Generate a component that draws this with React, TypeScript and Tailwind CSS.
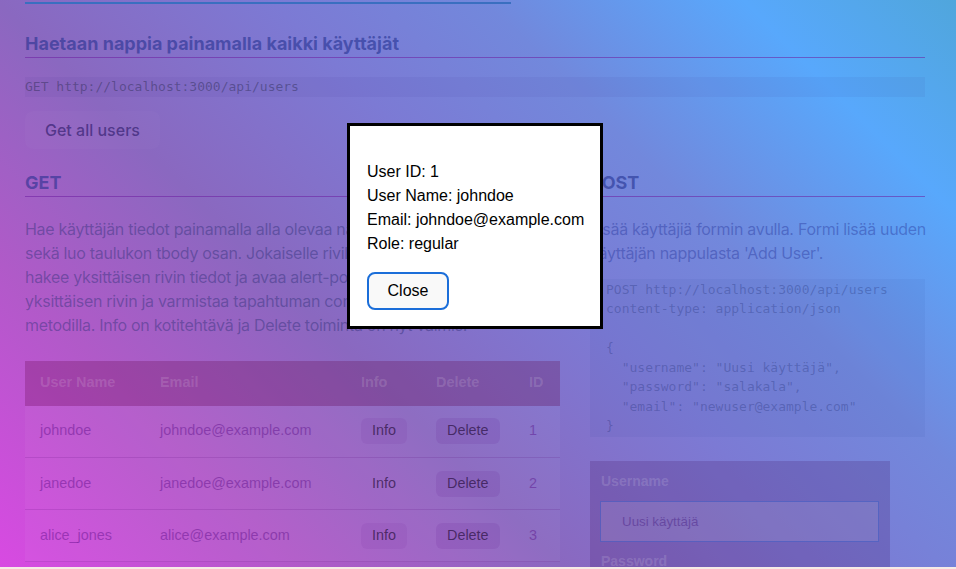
import React from 'react';

const users = [
  { id: 1, username: 'johndoe', email: 'johndoe@example.com', infoBg: true },
  { id: 2, username: 'janedoe', email: 'janedoe@example.com', infoBg: false },
  { id: 3, username: 'alice_jones', email: 'alice@example.com', infoBg: true },
];

const postExample = `POST http://localhost:3000/api/users
content-type: application/json

{
  "username": "Uusi käyttäjä",
  "password": "salakala",
  "email": "newuser@example.com"
}`;

const getText = [
  'Hae käyttäjän tiedot painamalla alla olevaa nappia. Funktio hakee',
  'sekä luo taulukon tbody osan. Jokaiselle riville Info-nappi, joka',
  'hakee yksittäisen rivin tiedot ja avaa alert-popupin. Delete poistaa',
  'yksittäisen rivin ja varmistaa tapahtuman confirm-',
  'metodilla. Info on kotitehtävä ja Delete toiminta on nyt valmis.',
];

function UserTable() {
  return (
    <table className="mt-6 w-full table-fixed border-collapse font-['Liberation_Sans',Arial,sans-serif] text-[14.4px]">
      <colgroup>
        <col className="w-[120px]" />
        <col className="w-[201px]" />
        <col className="w-[75px]" />
        <col className="w-[93px]" />
        <col className="w-[46px]" />
      </colgroup>
      <thead>
        <tr className="h-[45px] bg-[#600040]/25 text-left font-bold text-white/15">
          <th className="px-[15px]">User Name</th>
          <th className="px-[15px]">Email</th>
          <th className="px-[15px]">Info</th>
          <th className="px-[15px]">Delete</th>
          <th className="px-[15px]">ID</th>
        </tr>
      </thead>
      <tbody>
        {users.map((u) => (
          <tr
            key={u.id}
            className="h-[52px] border-b border-[#500070]/15 bg-white/[0.04] text-[#500080]/40"
          >
            <td className="px-[15px]">{u.username}</td>
            <td className="px-[15px]">{u.email}</td>
            <td className="px-[15px]">
              <button
                className={`h-[26px] rounded-md px-[11px] text-[#2a1040]/70 ${
                  u.infoBg ? 'bg-[#500080]/[0.07]' : 'bg-transparent'
                }`}
              >
                Info
              </button>
            </td>
            <td className="px-[15px]">
              <button className="h-[26px] rounded-md bg-[#500080]/10 px-[11px] text-[#2a1040]/70">
                Delete
              </button>
            </td>
            <td className="px-[15px]">{u.id}</td>
          </tr>
        ))}
      </tbody>
    </table>
  );
}

function AddUserForm() {
  return (
    <form className="mt-6 w-[300px] bg-[#401060]/20 p-[10px] font-['Liberation_Sans',Arial,sans-serif]">
      <label className="block pl-px text-sm font-bold leading-5 text-white/15">Username</label>
      <input
        className="mt-[10px] h-[41px] w-[279px] border border-[#3050c0]/50 bg-white/10 px-[21px] text-[13.33px] placeholder:text-[#300070]/35"
        placeholder="Uusi käyttäjä"
      />
      <label className="mt-[9px] block pl-px text-sm font-bold leading-5 text-white/15">Password</label>
      <input
        className="mt-[10px] h-[41px] w-[279px] border border-[#3050c0]/50 bg-white/10 px-[21px] text-[13.33px] placeholder:text-[#300070]/35"
        placeholder="salakala"
        type="password"
      />
    </form>
  );
}

function InfoDialog() {
  return (
    <div className="absolute left-[347px] top-[123px] border-[3px] border-black bg-white pb-4 pl-[17px] pr-4 pt-[34px] font-['Liberation_Sans',Arial,sans-serif] text-base leading-6 text-black">
      <p>User ID: 1</p>
      <p>User Name: johndoe</p>
      <p>Email: johndoe@example.com</p>
      <p>Role: regular</p>
      <button className="mt-4 h-[38px] w-[82px] rounded-lg border-2 border-[#1b6ed9] bg-[#f9f9f9] text-base text-black">
        Close
      </button>
    </div>
  );
}

export default function App() {
  return (
    <div className="relative h-[569px] w-[956px] overflow-hidden bg-[#f6ebe6]">
      <div className="h-[567px] overflow-hidden bg-[linear-gradient(45deg,#d84ae2_0%,#b05ac8_20%,#8a68c0_37%,#7c7ad4_55%,#7288dc_69%,#58a8fc_86%,#50a6dc_100%)] font-['Inter',sans-serif]">
        <div className="ml-[25px] w-[900px] pt-0.5">
          <div className="h-0.5 w-[486px] bg-[#3a6fc0]" />

          <h2 className="mt-[26px] border-b border-[#6e1ea0]/55 text-lg font-bold leading-[27px] text-[#1a2a8a]/55">
            Haetaan nappia painamalla kaikki käyttäjät
          </h2>
          <pre className="mt-[19px] bg-[#302080]/[0.06] font-['DejaVu_Sans_Mono',monospace] text-[13px] leading-[19.5px] text-[#2a2a50]/45">
            GET http://localhost:3000/api/users
          </pre>
          <button className="mt-[14px] h-[38px] rounded-lg bg-white/[0.02] px-5 text-base font-medium text-[#2d1a6a]/65">
            Get all users
          </button>

          <div className="mt-5 flex gap-[30px]">
            <section className="w-[535px]">
              <h2 className="border-b border-[#6e1ea0]/55 text-lg font-bold leading-[27px] text-[#1a2a8a]/55">
                GET
              </h2>
              <p className="mt-5 text-base leading-6 tracking-[-0.3px] text-[#30307a]/45">
                {getText.map((line, i) => (
                  <span key={i} className="block whitespace-nowrap">
                    {line}
                  </span>
                ))}
              </p>
              <UserTable />
            </section>

            <section className="w-[335px]">
              <h2 className="border-b border-[#6e1ea0]/55 text-lg font-bold leading-[27px] text-[#1a2a8a]/55">
                POST
              </h2>
              <p className="mt-5 text-base leading-6 tracking-[-0.3px] text-[#2a3aa0]/45">
                <span className="block whitespace-nowrap">Lisää käyttäjiä formin avulla. Formi lisää uuden</span>
                <span className="block whitespace-nowrap">käyttäjän nappulasta 'Add User'.</span>
              </p>
              <pre className="mt-[14px] bg-[#3040a0]/[0.07] px-4 py-px font-['DejaVu_Sans_Mono',monospace] text-[13px] leading-[19.5px] text-[#1a2a70]/30">
                {postExample}
              </pre>
              <AddUserForm />
            </section>
          </div>
        </div>
      </div>
      <InfoDialog />
    </div>
  );
}
